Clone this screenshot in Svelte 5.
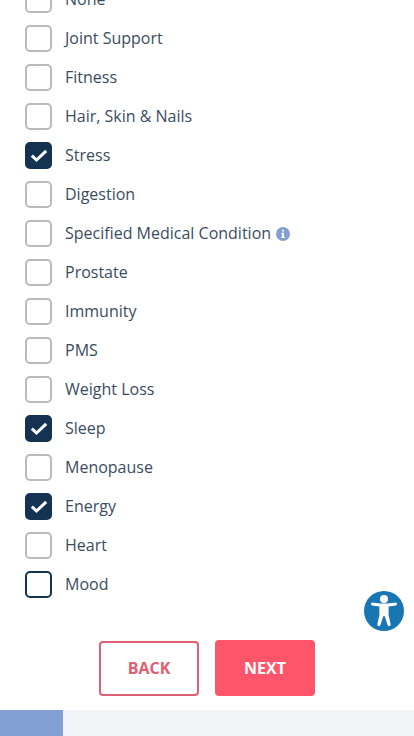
<script>
  let goals = $state([
    { name: 'None', checked: false },
    { name: 'Joint Support', checked: false },
    { name: 'Fitness', checked: false },
    { name: 'Hair, Skin & Nails', checked: false },
    { name: 'Stress', checked: true },
    { name: 'Digestion', checked: false },
    { name: 'Specified Medical Condition', checked: false, info: true },
    { name: 'Prostate', checked: false },
    { name: 'Immunity', checked: false },
    { name: 'PMS', checked: false },
    { name: 'Weight Loss', checked: false },
    { name: 'Sleep', checked: true },
    { name: 'Menopause', checked: false },
    { name: 'Energy', checked: true },
    { name: 'Heart', checked: false },
    { name: 'Mood', checked: false, active: true }
  ]);
  const progress = 15.2;
</script>

<div class="page">
  <form onsubmit={(e) => e.preventDefault()}>
    <ul>
      {#each goals as goal}
        <li>
          <label>
            <input type="checkbox" class:active={goal.active} bind:checked={goal.checked} />
            <svg class="tick" viewBox="0 0 27 27" aria-hidden="true">
              <path d="M6.8 13.6 L11.5 18 L21.2 8.8" />
            </svg>
            <span>{goal.name}</span>
          </label>
          {#if goal.info}
            <button type="button" class="info" aria-label="More information">
              <svg viewBox="0 0 14 14" aria-hidden="true">
                <circle cx="7" cy="7" r="7" fill="#819fd2" />
                <path d="M6 2.8h2v1.8H6z M5.3 5.8H8v3.9h.8v1.2H5.2V9.7H6V7h-.7z" fill="#fff" />
              </svg>
            </button>
          {/if}
        </li>
      {/each}
    </ul>
    <div class="actions">
      <button type="button" class="back">BACK</button>
      <button type="submit" class="next">NEXT</button>
    </div>
  </form>
  <div class="track" role="progressbar" aria-label="Progress" aria-valuenow={progress} aria-valuemin="0" aria-valuemax="100">
    <div class="bar" style:width="{progress}%"></div>
  </div>
  <button type="button" class="access" aria-label="Accessibility options">
    <svg viewBox="0 0 40 40" aria-hidden="true">
      <circle cx="20" cy="20" r="20" fill="#1876b3" />
      <circle cx="20" cy="7.9" r="4" fill="#fff" />
      <path
        d="M8.2 11.6 Q7 11.7 7 13 Q7 14.2 8.2 14.4 L15.4 15.6 V24 L13.4 33 Q13.2 34.8 14.5 35.1 Q16 35.4 16.5 33.8 L19.2 25.6 Q20 24 20.8 25.6 L23.5 33.8 Q24 35.4 25.5 35.1 Q26.8 34.8 26.6 33 L24.6 24 V15.6 L31.8 14.4 Q33 14.2 33 13 Q33 11.7 31.8 11.6 L23.5 12.5 H16.5 Z"
        fill="#fff"
      />
    </svg>
  </button>
</div>

<style>
  :global(body) {
    background: #fff;
  }
  .page {
    display: flex;
    flex-direction: column;
    height: 100vh;
    overflow: hidden;
    font: 16px/27px 'Open Sans', sans-serif;
    color: #3b4c60;
  }
  form {
    display: flex;
    flex: 1;
    flex-direction: column;
    justify-content: flex-end;
    min-height: 0;
    padding-bottom: 14px;
  }
  ul {
    display: flex;
    flex-direction: column;
    gap: 12px;
    margin: 0;
    padding: 0 25px;
    list-style: none;
  }
  li {
    display: flex;
    align-items: center;
    gap: 5px;
  }
  label {
    display: flex;
    position: relative;
    gap: 13px;
    cursor: pointer;
  }
  input {
    appearance: none;
    box-sizing: border-box;
    width: 27px;
    height: 27px;
    flex: none;
    margin: 0;
    border: 2px solid #bababa;
    border-radius: 5px;
    background: #fff;
  }
  input.active,
  input:hover,
  input:checked {
    border-color: #143352;
  }
  input:checked {
    background: #143352;
  }
  .tick {
    position: absolute;
    top: 0;
    left: 0;
    width: 27px;
    height: 27px;
    visibility: hidden;
    fill: none;
    stroke: #fff;
    stroke-width: 3;
    pointer-events: none;
  }
  input:checked + .tick {
    visibility: visible;
  }
  button {
    padding: 0;
    border: 0;
    background: none;
    font: inherit;
    cursor: pointer;
  }
  button svg {
    display: block;
    width: 100%;
  }
  .info {
    width: 14px;
    height: 14px;
  }
  .actions {
    display: flex;
    align-items: flex-end;
    justify-content: center;
    gap: 16px;
    margin-top: 42px;
  }
  .back,
  .next {
    width: 100px;
    height: 56px;
    border: 2px solid #ff556b;
    border-radius: 4px;
    font-weight: 700;
  }
  .back {
    height: 55px;
    border-color: #dc6172;
    color: #e0606f;
  }
  .next {
    background: #ff556b;
    color: #fff;
  }
  .track {
    height: 26px;
    flex: none;
    background: #f1f3f6;
  }
  .bar {
    height: 100%;
    background: #819fd2;
  }
  .access {
    position: fixed;
    right: 10px;
    bottom: 105px;
    width: 40px;
    height: 40px;
  }
</style>
